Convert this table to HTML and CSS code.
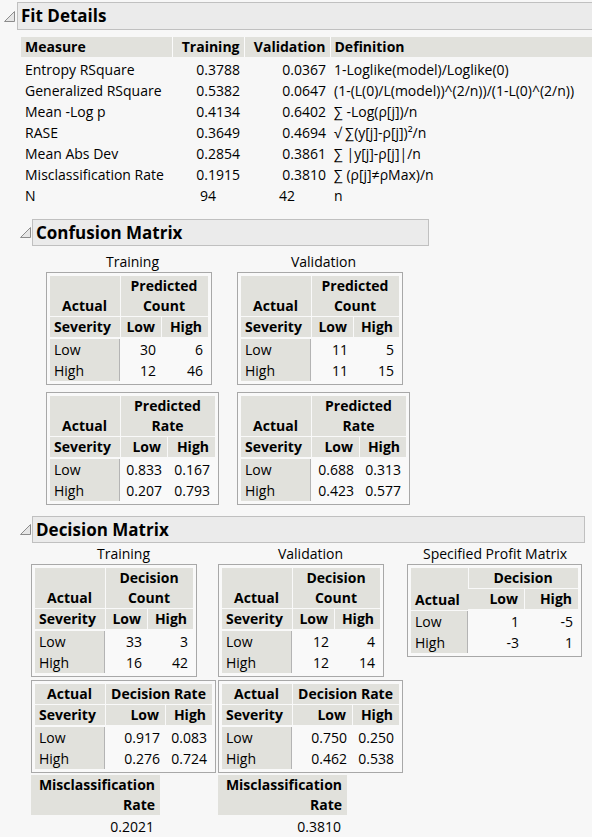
FILE: index.html
```html
<!DOCTYPE html>
<html>
<head>
<meta charset="utf-8">
<link rel="stylesheet" href="styles.css">
</head>
<body>
<div class="report">
  <section class="outline top">
    <div class="ohead">
      <svg class="tri" width="11" height="11" viewBox="0 0 11 11"><polygon points="10.5,0.5 10.5,10.5 0.5,10.5" fill="#e6e6e6" stroke="#8c8c8c" stroke-width="1"/></svg>
      <div class="obox wide">Fit Details</div>
    </div>
    <table class="fit">
      <colgroup><col class="c1"><col class="c2"><col class="c3"><col></colgroup>
      <thead>
        <tr><th class="l">Measure</th><th class="r">Training</th><th class="r">Validation</th><th class="l">Definition</th></tr>
      </thead>
      <tbody>
        <tr><td>Entropy RSquare</td><td class="r">0.3788</td><td class="r">0.0367</td><td>1-Loglike(model)/Loglike(0)</td></tr>
        <tr><td>Generalized RSquare</td><td class="r">0.5382</td><td class="r">0.0647</td><td>(1-(L(0)/L(model))^(2/n))/(1-L(0)^(2/n))</td></tr>
        <tr><td>Mean -Log p</td><td class="r">0.4134</td><td class="r">0.6402</td><td>∑ -Log(ρ[j])/n</td></tr>
        <tr><td>RASE</td><td class="r">0.3649</td><td class="r">0.4694</td><td>√ ∑(y[j]-ρ[j])²/n</td></tr>
        <tr><td>Mean Abs Dev</td><td class="r">0.2854</td><td class="r">0.3861</td><td>∑ |y[j]-ρ[j]|/n</td></tr>
        <tr><td>Misclassification Rate</td><td class="r">0.1915</td><td class="r">0.3810</td><td>∑ (ρ[j]≠ρMax)/n</td></tr>
        <tr><td>N</td><td class="c">94</td><td class="c">42</td><td>n</td></tr>
      </tbody>
    </table>
  </section>

  <section class="outline sub">
    <div class="ohead">
      <svg class="tri" width="11" height="11" viewBox="0 0 11 11"><polygon points="10.5,0.5 10.5,10.5 0.5,10.5" fill="#e6e6e6" stroke="#8c8c8c" stroke-width="1"/></svg>
      <div class="obox conf-w">Confusion Matrix</div>
    </div>
    <div class="cols conf">
      <div class="col cw1">
        <div class="cap">Training</div>
        <div class="box">
          <table class="mx w158">
            <colgroup><col style="width:70px"><col style="width:41px"><col style="width:47px"></colgroup>
            <tr class="h1"><th class="act">Actual</th><th colspan="2" class="ctr two">Predicted<br>Count</th></tr>
            <tr class="h2"><th class="l">Severity</th><th class="r">Low</th><th class="r">High</th></tr>
            <tr><td class="lab">Low</td><td class="n">30</td><td class="n">6</td></tr>
            <tr><td class="lab">High</td><td class="n">12</td><td class="n">46</td></tr>
          </table>
        </div>
        <div class="box gap7">
          <table class="mx w165">
            <colgroup><col style="width:70px"><col style="width:47px"><col style="width:48px"></colgroup>
            <tr class="h1"><th class="act">Actual</th><th colspan="2" class="ctr two">Predicted<br>Rate</th></tr>
            <tr class="h2"><th class="l">Severity</th><th class="r">Low</th><th class="r">High</th></tr>
            <tr><td class="lab">Low</td><td class="n">0.833</td><td class="n">0.167</td></tr>
            <tr><td class="lab">High</td><td class="n">0.207</td><td class="n">0.793</td></tr>
          </table>
        </div>
      </div>
      <div class="col cw1">
        <div class="cap">Validation</div>
        <div class="box">
          <table class="mx w158">
            <colgroup><col style="width:70px"><col style="width:42px"><col style="width:46px"></colgroup>
            <tr class="h1"><th class="act">Actual</th><th colspan="2" class="ctr two">Predicted<br>Count</th></tr>
            <tr class="h2"><th class="l">Severity</th><th class="r">Low</th><th class="r">High</th></tr>
            <tr><td class="lab">Low</td><td class="n">11</td><td class="n">5</td></tr>
            <tr><td class="lab">High</td><td class="n">11</td><td class="n">15</td></tr>
          </table>
        </div>
        <div class="box gap7">
          <table class="mx w165">
            <colgroup><col style="width:70px"><col style="width:48px"><col style="width:47px"></colgroup>
            <tr class="h1"><th class="act">Actual</th><th colspan="2" class="ctr two">Predicted<br>Rate</th></tr>
            <tr class="h2"><th class="l">Severity</th><th class="r">Low</th><th class="r">High</th></tr>
            <tr><td class="lab">Low</td><td class="n">0.688</td><td class="n">0.313</td></tr>
            <tr><td class="lab">High</td><td class="n">0.423</td><td class="n">0.577</td></tr>
          </table>
        </div>
      </div>
    </div>
  </section>

  <section class="outline sub dec-sec">
    <div class="ohead">
      <svg class="tri" width="11" height="11" viewBox="0 0 11 11"><polygon points="10.5,0.5 10.5,10.5 0.5,10.5" fill="#e6e6e6" stroke="#8c8c8c" stroke-width="1"/></svg>
      <div class="obox dec-w">Decision Matrix</div>
    </div>
    <div class="cols dec">
      <div class="col cw2">
        <div class="cap">Training</div>
        <div class="box">
          <table class="mx w158">
            <colgroup><col style="width:70px"><col style="width:42px"><col style="width:46px"></colgroup>
            <tr class="h1"><th class="act">Actual</th><th colspan="2" class="ctr two">Decision<br>Count</th></tr>
            <tr class="h2"><th class="l">Severity</th><th class="r">Low</th><th class="r">High</th></tr>
            <tr><td class="lab">Low</td><td class="n">33</td><td class="n">3</td></tr>
            <tr><td class="lab">High</td><td class="n">16</td><td class="n">42</td></tr>
          </table>
        </div>
        <div class="box gap3">
          <table class="mx w177">
            <colgroup><col style="width:70px"><col style="width:60px"><col style="width:47px"></colgroup>
            <tr class="h1"><th class="act one">Actual</th><th colspan="2" class="ctr">Decision Rate</th></tr>
            <tr class="h2"><th class="l">Severity</th><th class="r">Low</th><th class="r">High</th></tr>
            <tr><td class="lab">Low</td><td class="n">0.917</td><td class="n">0.083</td></tr>
            <tr><td class="lab">High</td><td class="n">0.276</td><td class="n">0.724</td></tr>
          </table>
        </div>
        <div class="mis">Misclassification<br>Rate</div>
        <div class="misv">0.2021</div>
      </div>
      <div class="col cw2">
        <div class="cap">Validation</div>
        <div class="box">
          <table class="mx w158">
            <colgroup><col style="width:70px"><col style="width:42px"><col style="width:46px"></colgroup>
            <tr class="h1"><th class="act">Actual</th><th colspan="2" class="ctr two">Decision<br>Count</th></tr>
            <tr class="h2"><th class="l">Severity</th><th class="r">Low</th><th class="r">High</th></tr>
            <tr><td class="lab">Low</td><td class="n">12</td><td class="n">4</td></tr>
            <tr><td class="lab">High</td><td class="n">12</td><td class="n">14</td></tr>
          </table>
        </div>
        <div class="box gap3">
          <table class="mx w177">
            <colgroup><col style="width:70px"><col style="width:60px"><col style="width:47px"></colgroup>
            <tr class="h1"><th class="act one">Actual</th><th colspan="2" class="ctr">Decision Rate</th></tr>
            <tr class="h2"><th class="l">Severity</th><th class="r">Low</th><th class="r">High</th></tr>
            <tr><td class="lab">Low</td><td class="n">0.750</td><td class="n">0.250</td></tr>
            <tr><td class="lab">High</td><td class="n">0.462</td><td class="n">0.538</td></tr>
          </table>
        </div>
        <div class="mis">Misclassification<br>Rate</div>
        <div class="misv">0.3810</div>
      </div>
      <div class="col cw3">
        <div class="cap">Specified Profit Matrix</div>
        <div class="box">
          <table class="mx w167">
            <colgroup><col style="width:57px"><col style="width:56px"><col style="width:54px"></colgroup>
            <tr class="h1"><th rowspan="2" class="l bot">Actual</th><th colspan="2" class="ctr">Decision</th></tr>
            <tr class="h2 thin"><th class="r">Low</th><th class="r">High</th></tr>
            <tr><td class="lab">Low</td><td class="n">1</td><td class="n">-5</td></tr>
            <tr><td class="lab">High</td><td class="n">-3</td><td class="n">1</td></tr>
          </table>
        </div>
      </div>
    </div>
  </section>
</div>
</body>
</html>
```

FILE: styles.css
```css
html, body {
  margin: 0;
  padding: 0;
  overflow: hidden;
}
body {
  background: #f7f7f7;
  color: #000;
  font-family: "Open Sans", "DejaVu Sans", sans-serif;
  font-size: 14px;
}
.report {
  padding-top: 2px;
}
.ohead {
  display: flex;
  align-items: center;
}
.tri {
  display: block;
  flex: none;
}
.obox {
  box-sizing: border-box;
  height: 28px;
  line-height: 26px;
  background: #ebebeb;
  border: 1px solid #c0c0c0;
  font-weight: 700;
  font-size: 17px;
  padding-left: 3px;
  white-space: nowrap;
}
.top .ohead { padding-left: 4px; }
.top .tri { margin-right: 2px; }
.obox.wide { flex: 1; border-right: none; }
.sub .ohead { padding-left: 20px; }
.sub .tri { margin-right: 1px; }
.sub .obox { height: 27px; line-height: 25px; }
.conf-w { width: 397px; }
.dec-w { width: 553px; }

/* Fit details table */
.fit {
  margin: 7px 0 0 21px;
  width: calc(100% - 21px);
  border-collapse: collapse;
  table-layout: fixed;
}
.fit .c1 { width: 151px; }
.fit .c2 { width: 72px; }
.fit .c3 { width: 86px; }
.fit th {
  background: #e1e1dc;
  font-weight: 700;
  height: 20px;
  line-height: 20px;
  padding: 0 4px;
  white-space: nowrap;
  border-left: 1px solid #fbfbfb;
  border-bottom: 2px solid #f7f7f7;
}
.fit th:first-child { border-left: none; }
.fit td {
  height: 21px;
  line-height: 21px;
  padding: 0 4px;
  white-space: nowrap;
}
.fit .l { text-align: left; }
.fit .r { text-align: right; }
.fit .c { text-align: center; }
.fit td:last-child { padding-left: 4px; }

/* Sections */
.sub { margin-top: 13px; }
.dec-sec { margin-top: 11px; }
.cols {
  display: flex;
  align-items: flex-start;
}
.conf { margin-left: 46px; gap: 18px; }
.dec { margin-left: 31px; gap: 2px; }
.col {
  display: flex;
  flex-direction: column;
  align-items: flex-start;
}
.cw1 { width: 173px; }
.cw2 { width: 185px; }
.cw3 { width: 176px; margin-left: 2px; }
.cap {
  align-self: stretch;
  text-align: center;
  line-height: 20px;
  height: 20px;
  margin-top: 6px;
}
.dec .cap { margin-top: 1px; }
.box {
  border: 1px solid #a8a8a8;
  padding: 3px;
  background: #f9f9f9;
}
.gap7 { margin-top: 7px; }
.gap3 { margin-top: 3px; }

/* Matrix tables */
.mx {
  border-collapse: separate;
  border-spacing: 0;
  table-layout: fixed;
}
.w158 { width: 158px; }
.w165 { width: 165px; }
.w167 { width: 167px; }
.w177 { width: 177px; }
.mx th {
  background: #e1e1dc;
  font-weight: 700;
  line-height: 20px;
  padding: 0 5px 0 4px;
  white-space: nowrap;
  overflow: hidden;
}
.mx th + th { border-left: 1px solid #f9f9f9; }
.mx .h1 th { border-bottom: 1px solid #f9f9f9; vertical-align: bottom; }
.mx .h2 th { border-bottom: 2px solid #f9f9f9; }
.mx .act { text-align: center; }
.mx .ctr { text-align: center; }
.mx .l { text-align: left; }
.mx .r { text-align: right; padding-right: 6px; }
.mx .bot { vertical-align: bottom; border-bottom: 2px solid #f9f9f9; }
.mx td {
  line-height: 21px;
  height: 21px;
  padding: 0;
  white-space: nowrap;
}
.mx .lab {
  background: #e1e1dc;
  padding-left: 4px;
  border-right: 1px solid #b4b4b4;
}
.mx .n {
  text-align: right;
  padding-right: 5px;
}

/* Misclassification */
.mis {
  margin-top: 2px;
  width: 129px;
  box-sizing: border-box;
  background: #e1e1dc;
  font-weight: 700;
  text-align: right;
  line-height: 20px;
  padding-right: 5px;
}
.misv {
  width: 129px;
  box-sizing: border-box;
  text-align: right;
  padding-right: 6px;
  line-height: 24px;
}
```
